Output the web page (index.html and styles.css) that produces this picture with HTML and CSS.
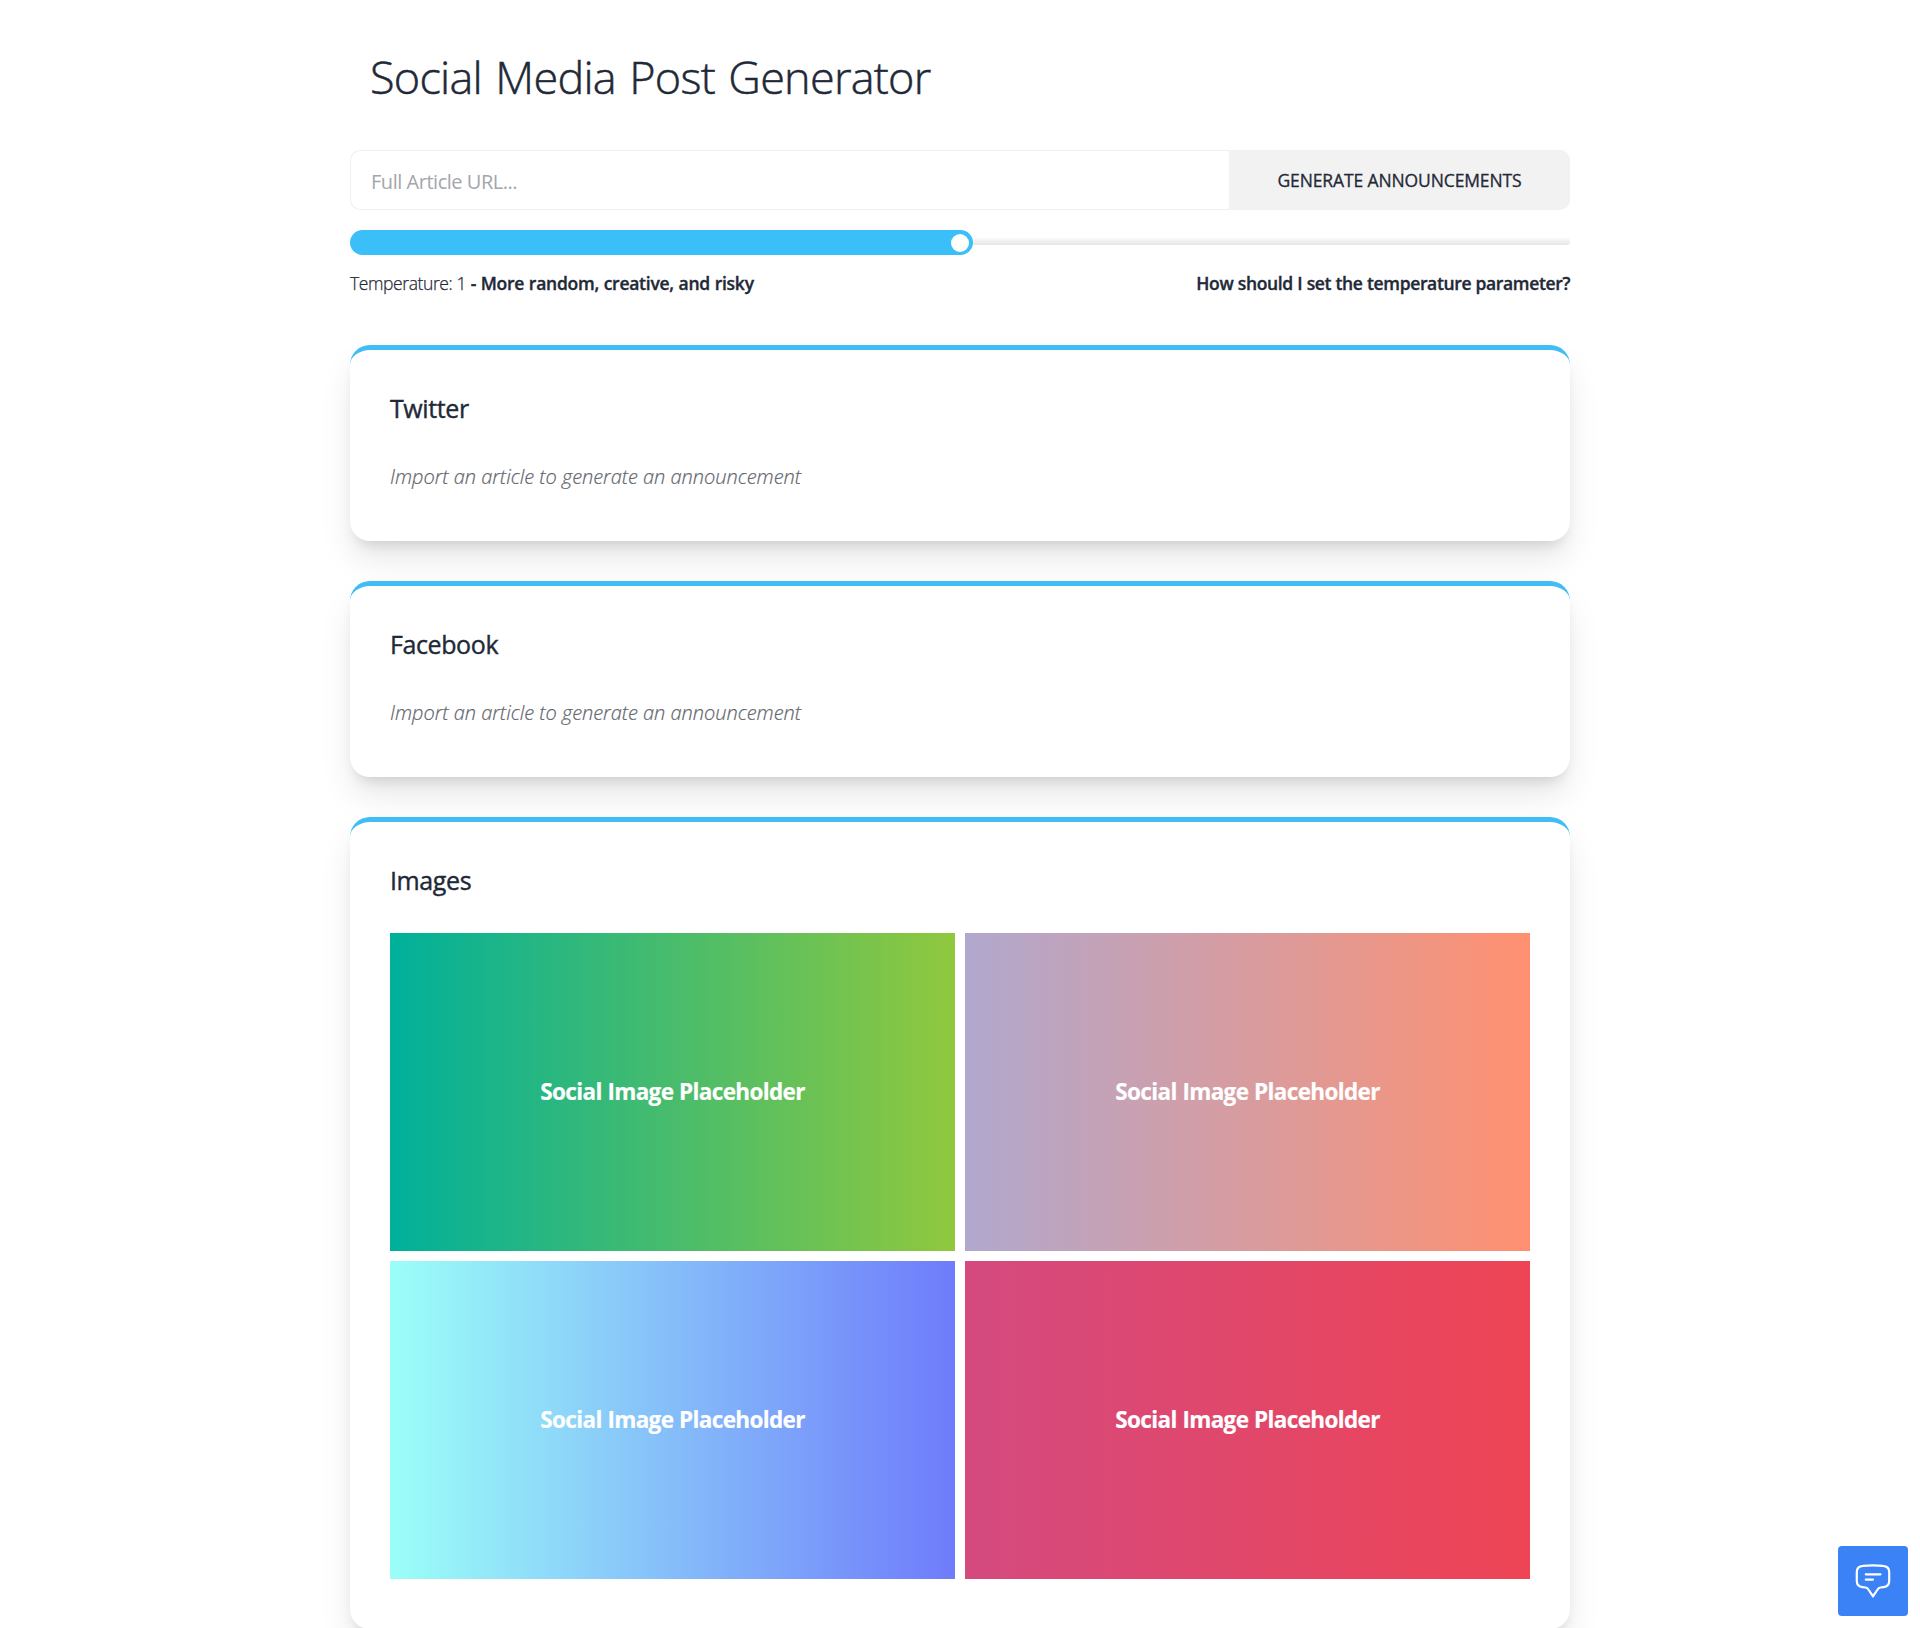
FILE: index.html
```html
<!DOCTYPE html>
<html lang="en">
<head>
<meta charset="utf-8">
<title>Social Media Post Generator</title>
<link rel="stylesheet" href="styles.css">
</head>
<body>
<main class="page">
  <h1 class="title"><span>Social Media Post Generator</span></h1>
  <form class="import">
    <input class="import-url" type="text" placeholder="Full Article URL...">
    <button class="import-btn" type="button"><span>GENERATE ANNOUNCEMENTS</span></button>
  </form>
  <div class="range">
    <div class="range-fill"><span class="range-thumb"></span></div>
    <div class="range-track"></div>
  </div>
  <div class="range-info">
    <p><span class="temp">Temperature: 1</span> <strong class="mood">- More random, creative, and risky</strong></p>
    <strong class="help">How should I set the temperature parameter?</strong>
  </div>
  <section class="card">
    <h2 class="card-title"><span>Twitter</span></h2>
    <p class="card-empty"><span>Import an article to generate an announcement</span></p>
  </section>
  <section class="card">
    <h2 class="card-title"><span>Facebook</span></h2>
    <p class="card-empty"><span>Import an article to generate an announcement</span></p>
  </section>
  <section class="card card-images">
    <h2 class="card-title"><span>Images</span></h2>
    <div class="gallery">
      <div class="tile tile-green"><span>Social Image Placeholder</span></div>
      <div class="tile tile-peach"><span>Social Image Placeholder</span></div>
      <div class="tile tile-sky"><span>Social Image Placeholder</span></div>
      <div class="tile tile-rose"><span>Social Image Placeholder</span></div>
    </div>
  </section>
</main>
<button class="chat" type="button" aria-label="Open chat">
  <svg width="36" height="34" viewBox="0 0 36 34" fill="none" stroke="#fff" stroke-width="2.2" stroke-linecap="round" stroke-linejoin="round">
    <path d="M8 1.9Q18 .7 28 1.9Q34.2 2.4 34.2 8V17Q34.2 22.6 28.5 23.2L25.5 23.5Q23.6 23.8 22.6 25.5L18 32.3L13.4 25.5Q12.4 23.8 10.5 23.5L7.5 23.2Q1.8 22.6 1.8 17V8Q1.8 2.4 8 1.9Z"/>
    <path d="M10.8 10.3H25.5M10.8 15.6H18"/>
  </svg>
</button>
</body>
</html>
```
FILE: styles.css
```css
* { box-sizing: border-box; }
body {
  margin: 0;
  height: 1628px;
  overflow: hidden;
  background: #fff;
  color: #1f2937;
  font-family: "Open Sans", "Noto Sans", sans-serif;
  font-size: 20px;
  line-height: 30px;
}
h1, h2, p { margin: 0; font-weight: 400; }
.page { width: 1220px; margin: 0 auto; padding-top: 51px; }
.title {
  height: 99px;
  padding-left: 20px;
  font-size: 45px;
  font-weight: 300;
  line-height: 52px;
  letter-spacing: -0.75px;
  word-spacing: 2.4px;
  -webkit-text-stroke: .5px;
}
.import { display: flex; height: 60px; }
.import-url {
  flex: 1;
  min-width: 0;
  border: 1px solid #f0f0f0;
  border-right: 0;
  border-radius: 10px 0 0 10px;
  padding: 3px 20px 0;
  font: inherit;
  letter-spacing: -.47px;
  outline: 0;
}
.import-url::placeholder { color: #a3a6ab; }
.import-btn {
  width: 341px;
  border: 0;
  border-radius: 0 10px 10px 0;
  background: #f2f2f2;
  color: #1f2937;
  font: 500 17.5px/24px "Open Sans", sans-serif;
  letter-spacing: -.12px;
  -webkit-text-stroke: .3px;
}
.range { display: flex; align-items: center; height: 25px; margin-top: 20px; }
.range-fill {
  display: flex;
  align-items: center;
  justify-content: flex-end;
  width: 623px;
  height: 25px;
  padding-right: 4px;
  border-radius: 13px;
  background: #3abff8;
}
.range-thumb { width: 18px; height: 18px; border-radius: 50%; background: #fff; }
.range-track {
  flex: 1;
  height: 7px;
  margin-bottom: 2px;
  border-radius: 0 3px 3px 0;
  background: linear-gradient(#fafafa, #e6e6e6);
}
.range-info {
  display: flex;
  justify-content: space-between;
  height: 90px;
  padding-top: 16px;
  font-size: 17.5px;
  line-height: 25px;
}
.range-info strong { font-weight: 600; -webkit-text-stroke: .35px; }
.temp { font-weight: 300; letter-spacing: -.4px; -webkit-text-stroke: .25px; }
.range-info .mood { letter-spacing: -.25px; word-spacing: .4px; }
.range-info .help { letter-spacing: -.36px; word-spacing: .25px; }
.card {
  height: 196px;
  margin-bottom: 40px;
  padding: 39px 40px 40px;
  border-top: 5px solid #41bdf5;
  border-radius: 20px;
  background: #fff;
  box-shadow: 0 20px 34px -3px rgba(0, 0, 0, .1), 0 9px 13px -6px rgba(0, 0, 0, .13);
}
.card-title {
  font-size: 25px;
  font-weight: 500;
  line-height: 38px;
  letter-spacing: -.4px;
  -webkit-text-stroke: .4px;
}
.card-empty {
  margin-top: 35px;
  color: #62666d;
  font-style: italic;
  font-weight: 300;
  letter-spacing: -.03px;
  -webkit-text-stroke: .2px;
}
.card-images { height: 812px; margin-bottom: 0; }
.card-images .card-title { height: 72px; }
.gallery { display: grid; grid-template-columns: 1fr 1fr; grid-auto-rows: 318px; gap: 10px; }
.tile {
  display: flex;
  align-items: center;
  justify-content: center;
  color: #fff;
  font-size: 22.5px;
  font-weight: 700;
  letter-spacing: -.65px;
  word-spacing: .6px;
  -webkit-text-stroke: .2px;
}
.tile-green { background: linear-gradient(to right, #00b09b, #90c83d); }
.tile-peach { background: linear-gradient(to right, #b1a8ce, #ff9070); }
.tile-sky { background: linear-gradient(to right, #9bfff8, #6f7bfb); }
.tile-rose { background: linear-gradient(to right, #d44a7f, #ee4455); }
.chat {
  position: fixed;
  right: 12px;
  bottom: 12px;
  display: flex;
  align-items: center;
  justify-content: center;
  width: 70px;
  height: 70px;
  padding: 0;
  border: 0;
  border-radius: 4px;
  background: #3b82f6;
}
```
